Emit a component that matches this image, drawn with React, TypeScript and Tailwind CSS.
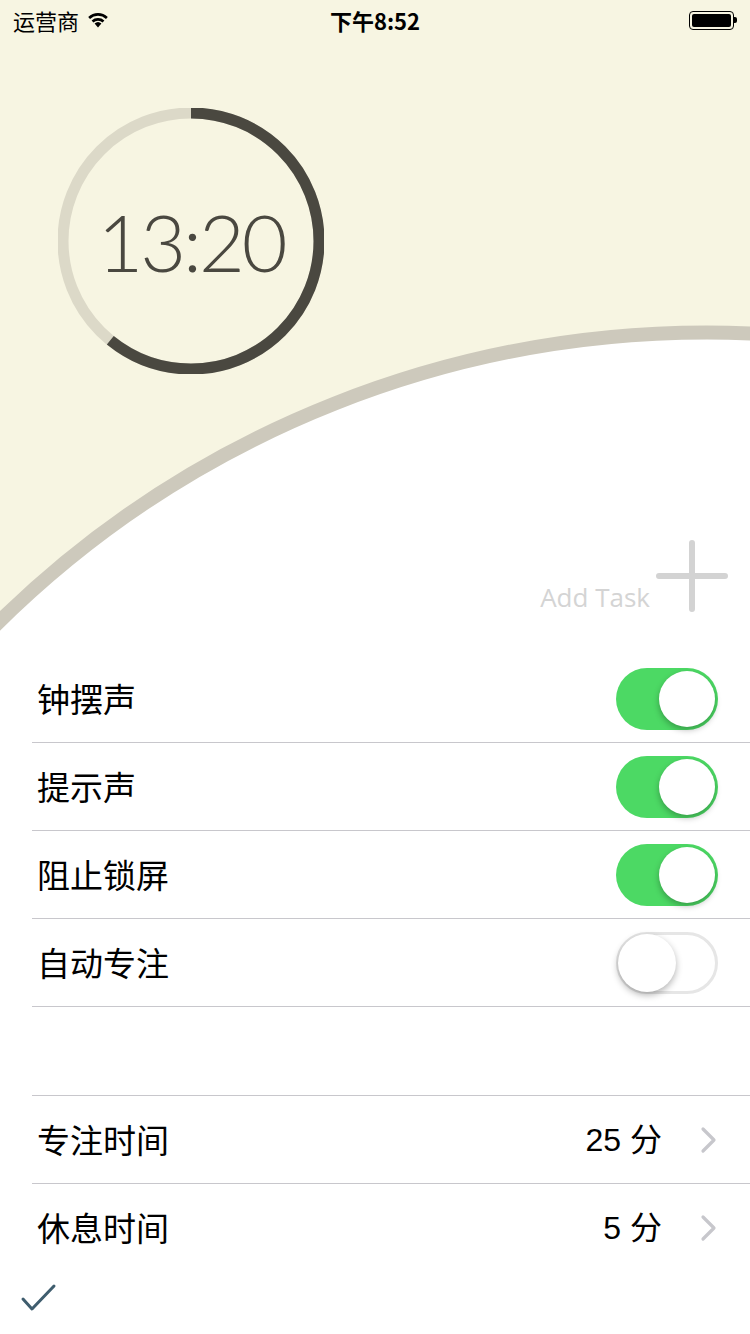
import React from 'react'

const cjk = { fontFamily: '"Noto Sans CJK SC", "Liberation Sans", sans-serif' }
const latin = { fontFamily: '"Liberation Sans", "Noto Sans CJK SC", sans-serif' }

function Toggle({ on }: { on: boolean }) {
  if (on) {
    return (
      <div className="relative h-[62px] w-[102px] rounded-full bg-[#4cd964]">
        <div className="absolute right-[3px] top-[3px] h-[56px] w-[56px] rounded-full bg-white shadow-[0_3px_6px_rgba(0,0,0,0.28)]" />
      </div>
    )
  }
  return (
    <div className="relative h-[62px] w-[102px] rounded-full border-[3px] border-[#e6e6e6] bg-white">
      <div className="absolute left-[-1px] top-[-1px] h-[58px] w-[58px] rounded-full bg-white shadow-[0_3px_7px_rgba(0,0,0,0.3)]" />
    </div>
  )
}

function Chevron() {
  return (
    <svg width="18" height="28" viewBox="0 0 18 28" fill="none">
      <path d="M3 3 L14 14 L3 25" stroke="#c7c7cc" strokeWidth="3.2" strokeLinecap="round" strokeLinejoin="round" />
    </svg>
  )
}

function SwitchRow({ label, on }: { label: string; on: boolean }) {
  return (
    <div className="ml-[32px] flex h-[88px] items-center justify-between border-b border-[#c8c7cc] pl-[5px] pr-[32px]">
      <span className="text-[33px] text-black" style={cjk}>{label}</span>
      <Toggle on={on} />
    </div>
  )
}

function ValueRow({ label, value, last }: { label: string; value: string; last?: boolean }) {
  return (
    <div
      className={`ml-[32px] flex h-[88px] items-center justify-between pl-[5px] pr-[32px] ${
        last ? '' : 'border-b border-[#c8c7cc]'
      }`}
    >
      <span className="text-[33px] text-black" style={cjk}>{label}</span>
      <div className="flex items-center gap-[38px]">
        <span className="text-[32px] text-black" style={latin}>{value}</span>
        <Chevron />
      </div>
    </div>
  )
}

export default function App() {
  // dark arc runs clockwise from 12 o'clock to ~219 degrees
  const r = 128
  const c = 2 * Math.PI * r
  const done = 219 / 360

  return (
    <div className="relative h-[1334px] w-[750px] overflow-hidden bg-white">
      {/* beige header with the big white curve */}
      <svg className="absolute left-0 top-0" width="750" height="660" viewBox="0 0 750 660">
        <rect x="0" y="0" width="750" height="660" fill="#f7f5e2" />
        <circle cx="707" cy="1343.5" r="1011" fill="#ffffff" stroke="#cdc9bc" strokeWidth="14" />
      </svg>

      <div className="relative">
        {/* status bar */}
        <div className="relative flex h-[40px] items-center px-[13px]">
          <div className="flex items-center gap-[8px]">
            <span className="text-[22px] leading-none text-black" style={cjk}>运营商</span>
            <svg width="22" height="16" viewBox="0 0 22 16">
              <path d="M11 15.5 L7.6 11.6 A5 5 0 0 1 14.4 11.6 Z" fill="#000" />
              <path d="M4.6 8.4 A9.5 9.5 0 0 1 17.4 8.4 L15.6 10.4 A7 7 0 0 0 6.4 10.4 Z" fill="#000" />
              <path d="M1.2 4.9 A14.5 14.5 0 0 1 20.8 4.9 L19 6.9 A12 12 0 0 0 3 6.9 Z" fill="#000" />
            </svg>
          </div>
          <div className="absolute left-0 right-0 top-0 flex h-[40px] items-center justify-center">
            <span className="text-[22px] font-semibold leading-none text-black" style={cjk}>下午8:52</span>
          </div>
          <div className="ml-auto flex items-center">
            <div className="flex h-[19px] w-[45px] items-center rounded-[4px] border-[1.5px] border-black p-[2px]">
              <div className="h-full w-full rounded-[2px] bg-black" />
            </div>
            <div className="h-[6px] w-[3px] rounded-r-[2px] bg-black" />
          </div>
        </div>

        {/* timer ring */}
        <div className="relative ml-[58px] mt-[68px] h-[266px] w-[266px]">
          <svg width="266" height="266" viewBox="0 0 266 266" className="absolute left-0 top-0">
            <circle cx="133" cy="133" r={r} fill="none" stroke="#dcd9c8" strokeWidth="11" />
            <circle
              cx="133"
              cy="133"
              r={r}
              fill="none"
              stroke="#4a4840"
              strokeWidth="11"
              strokeDasharray={`${c * done} ${c}`}
              transform="rotate(-90 133 133)"
            />
          </svg>
          <div className="absolute inset-0 flex items-center justify-center">
            <span
              className="text-[79px] font-light leading-none tracking-[-3px] text-[#4a4840]"
              style={{ fontFamily: 'Lato, "Open Sans", sans-serif' }}
            >
              13:20
            </span>
          </div>
        </div>

        {/* add task */}
        <div className="mt-[168px] flex h-[70px] items-end justify-end pr-[22px]">
          <span
            className="mb-[2px] mr-[6px] text-[26px] leading-none text-[#d4d4d4]"
            style={{ fontFamily: '"Open Sans", sans-serif' }}
          >
            Add Task
          </span>
          <svg width="72" height="72" viewBox="0 0 72 72">
            <path d="M36 3 V69 M3 36 H69" stroke="#d3d3d3" strokeWidth="6" strokeLinecap="round" />
          </svg>
        </div>

        {/* switches */}
        <div className="mt-[43px]">
          <SwitchRow label="钟摆声" on />
          <SwitchRow label="提示声" on />
          <SwitchRow label="阻止锁屏" on />
          <SwitchRow label="自动专注" on={false} />
        </div>

        {/* durations */}
        <div className="ml-[32px] mt-[88px] border-t border-[#c8c7cc]" />
        <ValueRow label="专注时间" value="25 分" />
        <ValueRow label="休息时间" value="5 分" last />

        {/* bottom check */}
        <div className="mt-[10px] pl-[20px]">
          <svg width="38" height="32" viewBox="0 0 38 32">
            <path d="M3 17 L12 27 L34 4" fill="none" stroke="#3f5d6e" strokeWidth="3" strokeLinecap="round" strokeLinejoin="round" />
          </svg>
        </div>
      </div>
    </div>
  )
}
